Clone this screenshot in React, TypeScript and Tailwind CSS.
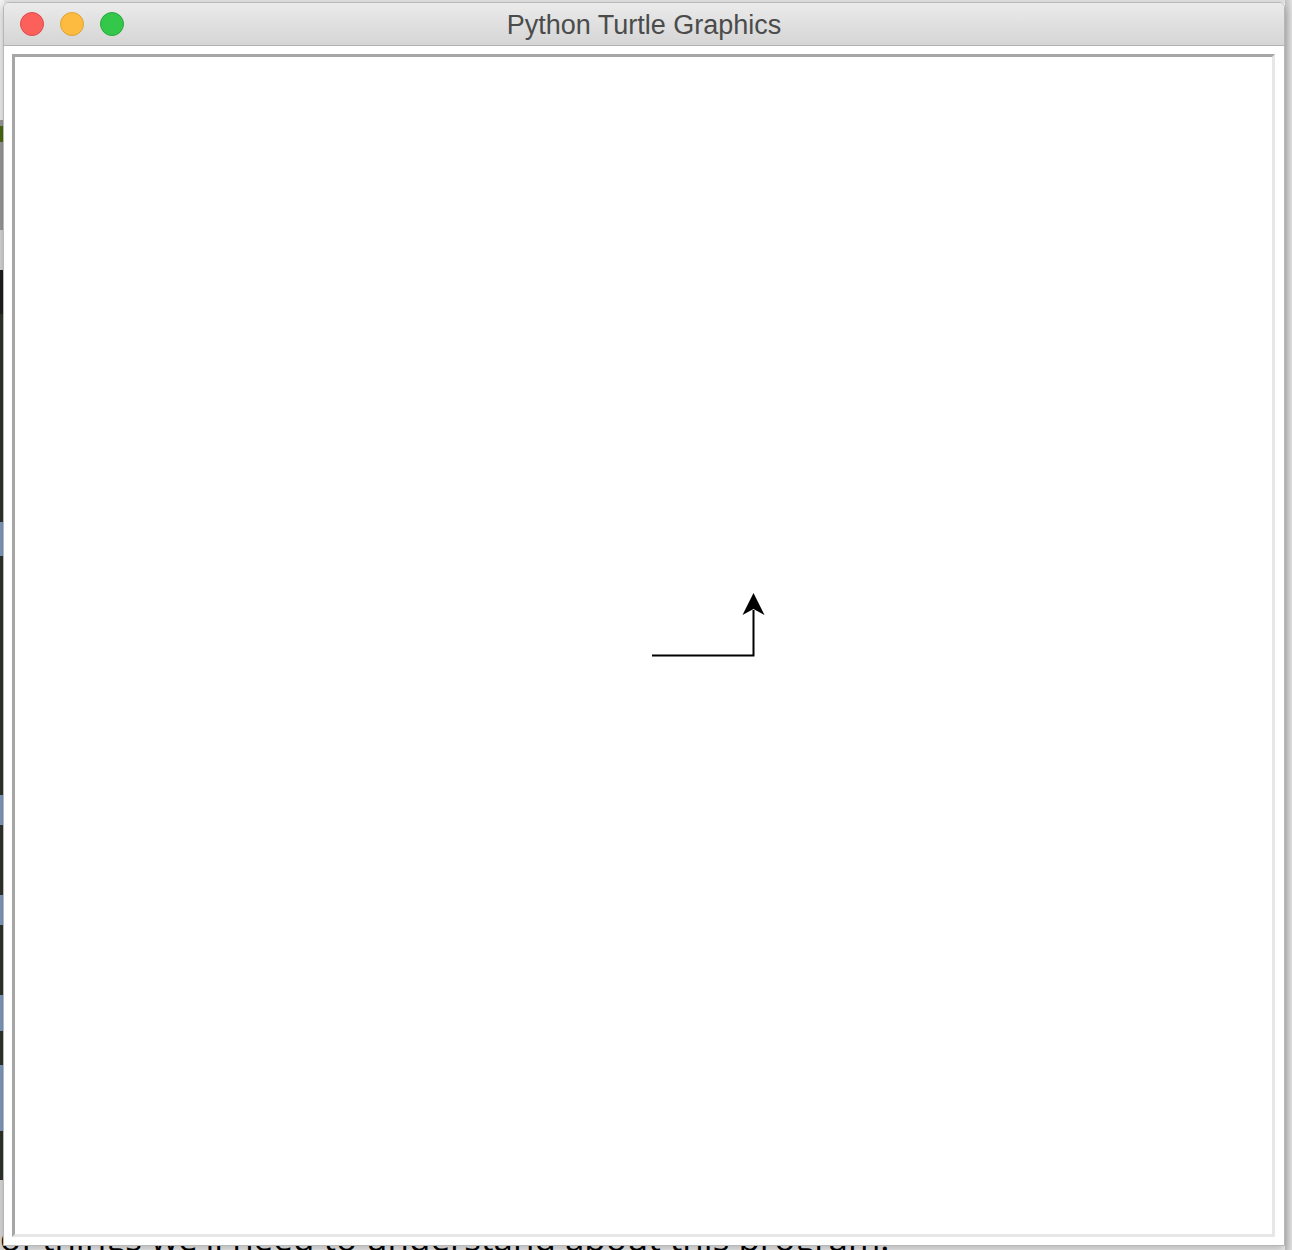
import React from "react";

const stripSegments: { h: string; c: string }[] = [
  { h: "h-[120px]", c: "bg-[#f0f0f0]" },
  { h: "h-[6px]", c: "bg-[#9a9a9a]" },
  { h: "h-[16px]", c: "bg-[#4b6a10]" },
  { h: "h-[88px]", c: "bg-[#9a9a9a]" },
  { h: "h-[40px]", c: "bg-[#d8d8d8]" },
  { h: "h-[44px]", c: "bg-[#1e1e1e]" },
  { h: "h-[208px]", c: "bg-[#2f342b]" },
  { h: "h-[34px]", c: "bg-[#7f9cc2]" },
  { h: "h-[239px]", c: "bg-[#2f342b]" },
  { h: "h-[30px]", c: "bg-[#7f9cc2]" },
  { h: "h-[70px]", c: "bg-[#2f342b]" },
  { h: "h-[30px]", c: "bg-[#7f9cc2]" },
  { h: "h-[70px]", c: "bg-[#2f342b]" },
  { h: "h-[36px]", c: "bg-[#7f9cc2]" },
  { h: "h-[34px]", c: "bg-[#2f342b]" },
  { h: "h-[66px]", c: "bg-[#7f9cc2]" },
  { h: "h-[49px]", c: "bg-[#2f342b]" },
  { h: "h-[70px]", c: "bg-[#dcdcdc]" },
];

export default function App() {
  return (
    <div
      className="grid w-[1292px] h-[1250px] overflow-hidden bg-[#f4f4f4]"
      style={{ fontFamily: '"Liberation Sans", Arial, sans-serif' }}
    >
      {/* desktop behind the window */}
      <div className="col-start-1 row-start-1 flex">
        <div className="flex flex-col w-[4px] shrink-0">
          {stripSegments.map((s, i) => (
            <div key={i} className={`${s.h} ${s.c} shrink-0`} />
          ))}
        </div>
        <div className="flex-1 flex flex-col justify-end border-t-[3px] border-[#e2e2e2]">
          <div
            className="-ml-[4px] whitespace-nowrap text-[35px] leading-[44px] -mb-[10px] text-black"
            style={{ fontFamily: '"Open Sans", sans-serif' }}
          >
            of things we'll need to understand about this program.
          </div>
        </div>
        <div className="w-[7px] shrink-0 bg-gradient-to-r from-[#c4c4c4] to-[#e0e0e0]" />
      </div>

      {/* window */}
      <div className="col-start-1 row-start-1 pl-[3px] pt-[2px] z-10">
        <div className="w-[1282px] h-[1244px] flex flex-col rounded-t-[6px] border border-[#b8b8b8] bg-white shadow-[0_4px_10px_rgba(0,0,0,0.25)]">
          <div className="relative h-[43px] flex items-center rounded-t-[5px] border-b border-[#b3b3b3] bg-gradient-to-b from-[#ebebeb] to-[#d5d5d5]">
            <div className="flex items-center gap-[16px] pl-[16px]">
              <div className="w-[24px] h-[24px] rounded-full bg-[#fc605b] border border-[#de4a45]" />
              <div className="w-[24px] h-[24px] rounded-full bg-[#fdbc40] border border-[#dea236]" />
              <div className="w-[24px] h-[24px] rounded-full bg-[#34c84a] border border-[#29a63a]" />
            </div>
            <div className="absolute inset-0 flex items-center justify-center text-[27px] text-[#4b4b4b] pointer-events-none">
              <span className="pt-[3px]">Python Turtle Graphics</span>
            </div>
          </div>
          <div className="flex-1 flex pl-[8px] pt-[8px] pr-[9px] pb-[8px]">
            <div className="flex-1 relative border-[3px] border-t-[#a6a6a6] border-l-[#a6a6a6] border-r-[#e7e7e7] border-b-[#e7e7e7] bg-white">
              <svg className="absolute left-0 top-0" width="1257" height="1177" viewBox="0 0 1257 1177">
                <g transform="translate(-15,-57)">
                  <path d="M652 655.5 H753.5 V610" fill="none" stroke="#000" strokeWidth="2" />
                  <polygon points="753.5,593 764.5,615 753.5,609 742.5,615" fill="#000" />
                </g>
              </svg>
            </div>
          </div>
        </div>
      </div>
    </div>
  );
}
